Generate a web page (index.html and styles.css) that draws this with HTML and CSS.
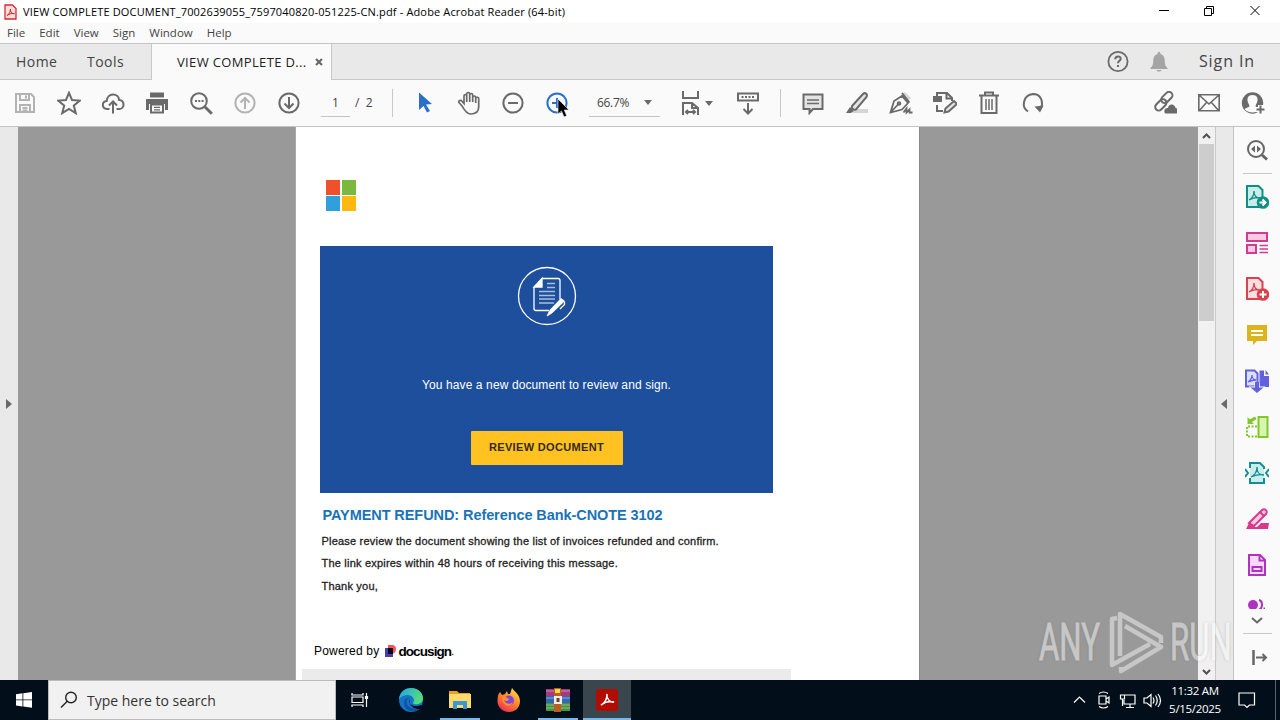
FILE: index.html
```html
<!DOCTYPE html>
<html lang="en">
<head>
  <meta charset="UTF-8">
  <title>Adobe Acrobat Reader (64-bit)</title>
  <link rel="stylesheet" href="styles.css">
</head>
<body>
  <header class="titlebar">
    <svg class="app-icon" width="13" height="16" viewBox="0 0 13 16"><path d="M1 1h7.500l3.500 3.500V15H1z" fill="#ffdcdc" stroke="#d42a2f" stroke-width="1.300"/><path d="M3.200 11.300c2-1 3.500-4 3.200-6.300c0 3 1.500 5 4 4.700c-2-.7-5 .1-7.200 1.600z" fill="none" stroke="#c9252b"/></svg>
    <span class="title">VIEW COMPLETE DOCUMENT_7002639055_7597040820-051225-CN.pdf - Adobe Acrobat Reader (64-bit)</span>
    <svg class="window-buttons" width="102" height="12" viewBox="0 0 102 12" fill="none" stroke="#000"><path d="M0 5.500h10M45.500 3.500h7v7h-7zM47.500 3.500v-2h7v7h-2M91.500 1l9 9M100.500 1l-9 9"/></svg>
  </header>

  <nav class="menu">
    <span>File</span><span>Edit</span><span>View</span><span>Sign</span><span>Window</span><span>Help</span>
  </nav>

  <div class="tabs">
    <span class="tab home">Home</span>
    <span class="tab tools">Tools</span>
    <div class="tab active"><span>VIEW COMPLETE D...</span>
      <svg width="8" height="8" viewBox="0 0 8 8" stroke="#666" stroke-width="2"><path d="M1 1l6 6M7 1L1 7"/></svg>
    </div>
    <div class="account">
      <svg width="24" height="24" viewBox="0 0 24 24" fill="none" stroke="#6a6a6a" stroke-width="1.800"><circle cx="12" cy="11.500" r="9.600"/><path stroke-width="2" d="M9.300 9.200c0-3.700 5.600-3.500 5.400-.3c-.1 2-2.700 1.900-2.700 4.300M12 15v2"/></svg>
      <svg width="24" height="24" viewBox="0 0 24 24" fill="#a5a5a5"><path d="M3.500 18c3-2.500 2.500-5 2.800-8.500c.2-3 2-5 4.200-5.500c.2-3 2.800-3 3 0c2.200.5 4 2.500 4.200 5.500c.3 3.500-.2 6 2.800 8.500v1h-17zM9.500 20h5c-.5 2-4.500 2-5 0z"/></svg>
      <span class="sign-in">Sign In</span>
    </div>
  </div>

  <div class="toolbar">
    <div class="group">
      <svg class="disabled" viewBox="0 0 24 24"><path d="M3 3h15l3 3v15H3zM7 3v6h9V3M13 4.500v3M7 21v-7h10v7M9.500 17h5M9.500 19.500h5"/></svg>
      <svg viewBox="0 0 24 24"><path d="M12 1.800l3 7.200l7.800.6l-6 5l2 7.600l-6.800-4.200l-6.800 4.200l2-7.600l-6-5l7.800-.6z"/></svg>
      <svg viewBox="0 0 24 24"><path d="M8.500 18H6c-5.500-.5-5.500-7.500-.3-8c.5-8.500 11.800-8.500 12.500-1c6 .5 5.500 9 0 9h-2.700M12 22.500V11M8 14.500l4-4l4 4"/></svg>
      <svg viewBox="0 0 24 24"><path class="solid" d="M5 1.500h14v5H5zM1 8h22v11h-3v-6H4v6H1z"/><path d="M6 13.500h12v8H6z"/><path stroke-width="1.300" d="M9 16.300h6M9 18.800h6"/></svg>
      <svg viewBox="0 0 24 24"><circle cx="10" cy="10" r="7.800"/><path stroke-width="3" d="M15.800 15.800l7 7"/><path d="M6 10h2M9.300 10h2M12.600 10h2"/></svg>
      <svg class="disabled" viewBox="0 0 24 24"><circle cx="12" cy="12" r="9.600"/><path d="M12 18V7M7.500 11.500L12 7l4.500 4.500"/></svg>
      <svg viewBox="0 0 24 24"><circle cx="12" cy="12" r="9.600"/><path d="M12 6v11M7.500 12.500L12 17l4.500-4.500"/></svg>
    </div>
    <div class="pages"><span class="page-number">1</span><span>/&nbsp; 2</span></div>
    <div class="group divided">
      <svg class="blue" viewBox="0 0 24 24"><path class="solid" d="M6 1.500l13 11.500l-6 .5l4 6.500l-3 1.500l-3.500-6.500L6 19z"/></svg>
      <svg viewBox="0 0 24 24"><path stroke-width="1.700" d="M5 15L2 11.500c-1-2 1.500-3 3-1.200l2 2.300V5c0-2 2.700-2 2.700 0v6V3c0-2 3-2 3 0v8V4c0-2 3-2 3 0v7V6.500c0-2 3-2 3 0c.6 0 3-1 3 1V16c0 4.500-3 7-8.200 7C9.500 23 7 18.500 5 15zM18.700 7v5"/></svg>
      <svg viewBox="0 0 24 24"><circle cx="12" cy="12" r="9.600"/><path d="M7 12h10"/></svg>
      <div class="hovered">
        <svg class="blue" viewBox="0 0 24 24"><circle cx="12" cy="12" r="9.600"/><path d="M7 12h10M12 7v10"/></svg>
        <svg class="cursor" width="13" height="20" viewBox="0 0 13 20"><path d="M1 1v15l3.500-3l2.500 6l2.700-1.200L7.300 12H12z" fill="#000" stroke="#fff" stroke-width=".6"/></svg>
      </div>
    </div>
    <div class="zoom"><span>66.7%</span><i class="caret"></i></div>
    <div class="fit">
      <svg viewBox="0 0 24 24"><path d="M4 0v7h15V0M4 24V12h9l6 5v7M13 12v5h5M7 21h9M9 19l-2 2l2 2M14 19l2 2l-2 2"/></svg>
      <i class="caret"></i>
    </div>
    <svg class="scroll-mode" viewBox="0 0 24 24"><path d="M2 2.500h20v7H2zM12 12v10M7.500 18l4.500 4.500l4.500-4.500"/><path stroke-dasharray="2 1.500" d="M5.500 6h13"/></svg>
    <div class="group divided comment-tools">
      <svg viewBox="0 0 24 24"><path fill="#e4e4e4" d="M2.500 3.500h19V18H12l-3.500 4v-4h-6z"/><path stroke-width="1.500" d="M6 9h12M6 12.500h12"/></svg>
      <svg viewBox="0 0 24 24"><path class="shade" d="M11 18h12v4H7z"/><path fill="#e4e4e4" d="M7 15L18 3c2-2 5 0 3.500 3L11 18.500c-2 1-5-1-4-3.500z"/><path class="solid" d="M5 16l4 4l-3 2H1z"/></svg>
      <svg viewBox="0 0 24 24"><path class="shade" d="M12 4l4-3l6 6l-4 4z"/><path stroke-width="1.800" d="M1.500 21.500L5 10l8-5l6 7l-6 6.500zM13 2l7.500 9.500M2 21l7-7.500M14.500 21.500l3-4v4l3-3v3h3"/><circle cx="10" cy="12.500" r="1.300"/></svg>
      <svg viewBox="0 0 24 24"><path class="solid" d="M0 5h9v6H0z"/><path d="M4 5V2h10l5 5v3M13.500 2v5.500H19M4 14v6h6"/><path fill="#e4e4e4" d="M11.500 21.500l1-4L21 10l3 3l-8.500 7.500z"/></svg>
      <svg viewBox="0 0 24 24"><path d="M2 4.500h20M8 4V1.500h8V4M4.500 5v17h15V5"/><path stroke-width="1.500" d="M9 8v11M12 8v11M15 8v11"/></svg>
      <svg viewBox="0 0 24 24"><path d="M7 20.500C0 16 2 4 12 3c8 0 11 8 7.500 15"/><path class="solid" d="M13.500 15.500l9-1l-3.500 7z"/></svg>
    </div>
    <div class="group share-tools">
      <svg viewBox="0 0 24 24"><g transform="rotate(-45 11 10)"><rect x="-.5" y="7" width="13" height="7" rx="3.500"/><rect x="9" y="6" width="13" height="7" rx="3.500"/></g><path class="solid" d="M12 22.500c-2-4 1-6 3-5.500c1-5 7-4 7.500 0c3 0 2.500 5 1 5.500z"/></svg>
      <svg viewBox="0 0 24 24"><path stroke-width="1.600" d="M1.800 3.800h20.400v16H1.800zM2 4l10 9L22 4M2 20l7.500-8.500M22 20l-7.500-8.500"/></svg>
      <svg viewBox="0 0 24 24"><circle class="solid" cx="11.500" cy="12" r="10.700"/><path class="paper" d="M11.500 4c4.500 0 6 3.500 4.500 7.500c-.6 1.500-1.500 2.500-1.500 4l5 2.500c-3 4.500-13 4.500-16 0l5-2.500c0-1.500-1-2.500-1.500-4C5.500 7.500 7 4 11.500 4z"/><path class="halo" d="M15 18.500h9.500M19.500 14v9"/><path d="M15.500 18.500h8M19.500 14.500v8"/></svg>
    </div>
  </div>

  <main class="viewer">
    <div class="left-pane"><i class="arrow right"></i></div>
    <div class="canvas">
      <article class="page">
        <div class="ms-logo"><i></i><i></i><i></i><i></i></div>
        <section class="banner">
          <svg width="60" height="60" viewBox="0 0 60 60" fill="none" stroke="#fff" stroke-width="1.300"><circle cx="30" cy="30" r="28.500"/><path d="M25 12.500h16q2 0 2 2v19M32 44.500H19q-2 0-2-2V21"/><path d="M17 21l8-8.500V21z" fill="#fff"/><path d="M30 17.500h8M30 21.500h8M22 25.500h16M22 29.500h16M22 33h16M22 37h15" stroke="#a9bedf"/><path d="M30 50l3-6L44 32.500l3.500 2.500L35 47z" fill="#fff" stroke-width=".8"/><path d="M43 43l4.500-4.500v-3"/></svg>
          <p>You have a new document to review and sign.</p>
          <a class="review">REVIEW DOCUMENT</a>
        </section>
        <h1>PAYMENT REFUND: Reference Bank-CNOTE 3102</h1>
        <p class="line first">Please review the document showing the list of invoices refunded and confirm.</p>
        <p class="line second">The link expires within 48 hours of receiving this message.</p>
        <p class="line third">Thank you,</p>
        <div class="powered"><span>Powered by</span>
          <svg width="11" height="12" viewBox="0 0 11 12"><path d="M3 0h4q4 0 4 4t-4 5H3z" fill="#f2545b"/><path d="M0 3h8v9H0z" fill="#4540a8"/><path d="M3 3h5v6H3z" fill="#130020"/></svg>
          <b>docusign</b><small>.</small>
        </div>
        <div class="footer-block"></div>
      </article>
    </div>
    <div class="scrollbar">
      <svg width="9" height="6" viewBox="0 0 9 6"><path d="M1 5l3.500-3.500L8 5"/></svg>
      <div class="thumb"></div>
      <svg class="down" width="9" height="6" viewBox="0 0 9 6"><path d="M1 1l3.500 3.500L8 1"/></svg>
    </div>
    <div class="right-pane"><i class="arrow left"></i></div>
    <aside class="rail">
      <svg class="gray" viewBox="0 0 24 24"><circle cx="11" cy="11" r="8"/><path stroke-width="3" d="M17 17l5 4.500"/><path class="solid" d="M10 7.500v7L6 11zM12 7.500v7l4-3.500z"/></svg>
      <hr>
      <svg class="teal" viewBox="0 0 24 24"><path d="M2 1h11.500l4 4v17H2z"/><path class="thin" d="M4 15c4-2 5-5 5-9c0 5 2 7 6 7c-4-1-7 0-11 2"/><circle class="disc" cx="18" cy="17.500" r="6.300"/><path class="white" d="M14.500 17.500h6M17.500 14.500l3 3l-3 3"/></svg>
      <svg class="pink" viewBox="0 0 24 24"><path d="M2 2h20v8H2zM2 14h9v8H2z"/><path class="thin" d="M14.500 14.500H23M14.500 18H23M14.500 21.500H23"/></svg>
      <svg class="red" viewBox="0 0 24 24"><path d="M2 1h11.500l4 4v17H2z"/><path class="thin" d="M4 15c4-2 5-5 5-9c0 5 2 7 6 7c-4-1-7 0-11 2"/><circle class="disc" cx="18" cy="17.500" r="6.300"/><path class="white" d="M14.500 17.500h7M18 14v7"/></svg>
      <svg class="yellow" viewBox="0 0 24 24"><path class="solid" d="M2 2h20v16H12l-4 4v-4H2z"/><path class="white" d="M6 8h12M6 12h12"/></svg>
      <svg class="violet" viewBox="0 0 24 24"><path d="M1 1.500h8.500l3 3v13H1z"/><path class="thin" d="M3 13c3-2 4-4 4-7c0 3 2 5 4 5c-3 0-5 1-8 2"/><path class="solid" d="M14.500 1.500h4.500v5.500h5v11h-9.500zM20.500 1l3.500 4.500h-3.500z"/><path class="halo" d="M10.500 14v4.500H6l6 5.500l6-5.500h-4.500V14"/><path class="solid" d="M10 13h4v5.500h4.500L12 24l-6.500-5.500H10z"/></svg>
      <svg class="green" viewBox="0 0 24 24"><path d="M13.500 2h9v20h-9z"/><path fill="none" stroke-dasharray="2 1.500" d="M12 11.500H2v10h11"/><path class="solid" d="M2.500 2l2.300 2.300L10 1.500l1.500 2.500L7 7l2 2H2.500z"/></svg>
      <svg class="aqua" viewBox="0 0 24 24"><path class="fill-only" d="M5 2h10l4 4v16H5z"/><path fill="none" d="M5 7V2h10l4 4v2M5 17v5h14v-5M0 8l3 4l-3 4M24 8l-3 4l3 4"/><path class="thin" d="M6 16c4-2 6-5 6-10c0 6 2 8 7 8c-5-1-8 0-13 2"/></svg>
      <svg class="rose" viewBox="0 0 24 24"><path d="M4 16L17 3c3-2 6 1 4 4L9 19z"/><path class="solid" d="M1 22l3-6l6 4h2l4-4h8l-1 6z"/><path d="M15 5l4 4"/></svg>
      <svg class="purple" viewBox="0 0 24 24"><path d="M4 2h11l5 5v15H4zM14.500 2v5.500H20"/><path d="M7.500 14h9v4h-9z"/></svg>
      <div class="clipped"><svg class="purple" viewBox="0 0 24 24"><circle class="disc" cx="8" cy="10" r="5"/><path fill="none" d="M14 5c4 1 4 8 0 10M18.500 13.500h1.500"/></svg></div>
      <svg class="gray more" width="12" height="8" viewBox="0 0 12 8"><path d="M1 1l5 4.500L11 1"/></svg>
      <hr>
      <svg class="gray" viewBox="0 0 24 24"><path stroke-width="2.500" d="M8.500 5v15"/><path d="M11 12.500h10M17.500 9l3.500 3.500l-3.500 3.500"/></svg>
    </aside>
  </main>

  <footer class="taskbar">
    <div class="start"><svg width="16" height="16" viewBox="0 0 16 16" fill="#fff"><path d="M0 2.200l6.500-.9v6.200H0zM7.300 1.200L16 0v7.500H7.300zM0 8.300h6.500v6.200L0 13.600zM7.300 8.300H16v7.500l-8.700-1.200z"/></svg></div>
    <div class="search">
      <svg width="18" height="18" viewBox="0 0 18 18" fill="none" stroke="#222" stroke-width="1.400"><circle cx="11" cy="6.500" r="5.300"/><path d="M7.300 10.300L1 16.500"/></svg>
      <span>Type here to search</span>
    </div>
    <div class="apps">
      <div class="app"><svg width="18" height="16" viewBox="0 0 18 16" fill="none" stroke="#fff" stroke-width="1.200"><path d="M1 1v2h11V1M1 15v-2h11v2M1 5h11v5.500H1zM15.500 1v14"/><path fill="#fff" d="M14.500 4.500h2v2h-2z"/></svg></div>
      <div class="app"><svg width="26" height="26" viewBox="0 0 26 26"><defs><linearGradient id="edge" x1="0" x2="1" y1="0" y2=".4"><stop offset="0" stop-color="#1fa6e8"/><stop offset="1" stop-color="#54dc7c"/></linearGradient></defs><circle cx="13" cy="13" r="12" fill="#1473c9"/><path d="M1 12C2 4 8 1 13 1c8 0 12 6 12 10c0 5-4 7-9 6c-2-1 0-2 0-4C15 7 6 6 1 12z" fill="url(#edge)"/><path d="M10 11c-4 5 0 12 12 11C16 27 6 24 6 16c0-4 3-6 6-5z" fill="#12529d"/><path d="M12 12c-3 5 4 9 11 6l2 1l-1 2c-5 3-14-1-12-9z" fill="#020f1a"/></svg></div>
      <div class="app running"><svg width="24" height="22" viewBox="0 0 24 22"><path d="M1 2h8l2 2h11v5H1z" fill="#e8a317"/><path d="M1 5h22v14H1z" fill="#ffd96a"/><path d="M5 20v-8h14v8h-4v-4H9v4z" fill="#3c97d6"/></svg></div>
      <div class="app"><svg width="24" height="24" viewBox="0 0 24 24"><defs><linearGradient id="fox" x1=".8" x2=".2" y1="0" y2="1"><stop offset="0" stop-color="#ffe14a"/><stop offset=".5" stop-color="#ff8129"/><stop offset="1" stop-color="#ee265e"/></linearGradient></defs><path d="M3 4l2 3l3-1l2-3l1 3h2l2-6c3 4 8 7 8 13c0 7-5 11-11 11S.5 19.500.5 13C.5 9 1 6 3 4z" fill="url(#fox)"/><circle cx="12" cy="12.500" r="5" fill="#8046d8"/><path d="M5 9c3-1 5 1 7 2c-1 3-4 2-5 1c1 4 6 5 9 2c-2 6-11 5-11-5z" fill="#ff922b"/></svg></div>
      <div class="app running"><svg width="26" height="24" viewBox="0 0 26 24"><path d="M1 1h24v7H1z" fill="#a43a7c"/><path d="M1 8h24v7H1z" fill="#3567b8"/><path d="M1 15h24v8H1z" fill="#46953c"/><path d="M1 3h24M1 10h24M1 17h24M1 20h24" stroke="#dacbd0" stroke-opacity=".6"/><path d="M9 0h7v24H9z" fill="#bd5d20"/><path d="M9 8h8v8H9z" fill="#eee"/><path d="M11.500 10h3v4h-3z" fill="#724027"/><path d="M10 3h5" stroke="#ffda4a" stroke-width="4"/></svg></div>
      <div class="app running current"><svg width="22" height="22" viewBox="0 0 22 22"><rect width="22" height="22" rx="3" fill="#b30b00"/><path d="M5 16c4-2 6-6 6-11c-1 4 3 9 7 8c-4-1-9 0-13 3z" fill="none" stroke="#fff" stroke-width="1.500"/></svg></div>
    </div>
    <div class="tray">
      <svg width="90" height="20" viewBox="0 0 90 20" fill="none" stroke="#fff" stroke-width="1.200"><path d="M1 12.500l5.500-5.500l5.500 5.500M26 6h7v8h-7zM33 9l3-2v6l-3-2M26 3.500q4.500-3 9 0M26 16.500q4.500 3 9 0M52 5h10v9H51v-4M57 14v3M53 17.500h8M47.500 5h4v4h-4zM49.500 9v7M71 8h3l4-3.500v12L74 13h-3zM80 7.500q2 3 0 6M82.500 5.500q3.500 5 0 10M85 4q5 6.500 0 13"/></svg>
      <div class="clock"><span>11:32 AM</span><span>5/15/2025</span></div>
      <svg width="18" height="18" viewBox="0 0 18 18" fill="none" stroke="#fff" stroke-width="1.200"><path d="M1 2h15.500v12h-5L9 16.500L6.500 14H1z"/></svg>
      <i class="show-desktop"></i>
    </div>
  </footer>

  <div class="watermark">
    <span>ANY</span>
    <svg width="58" height="66" viewBox="0 0 58 66" fill="none" stroke="#fff" stroke-width="4.500" stroke-linejoin="round"><path d="M12 47V5L53 28v6M17 17L53 38L13 62v-4M9 9l-5 1v46L42 35"/></svg>
    <span>RUN</span>
  </div>
</body>
</html>
```
FILE: styles.css
```css
* {
  box-sizing: border-box;
}
body {
  margin: 0;
  width: 1280px;
  height: 720px;
  overflow: hidden;
  position: relative;
  display: grid;
  grid-template-rows: 23px 20px 37px 46px 554px 40px;
  font-family: "Open Sans", "Noto Sans", sans-serif;
  color: #444;
  background: #fafafa;
}
svg {
  display: block;
  flex: none;
}
p, h1 {
  margin: 0;
}

/* title and menu */
.titlebar {
  display: flex;
  align-items: center;
  background: #fff;
  padding-left: 4px;
}
.title {
  margin-left: 6px;
  font-size: 11px;
  letter-spacing: 0.150px;
  color: #000;
  white-space: nowrap;
}
.window-buttons {
  margin: 0 19px 2px auto;
}
.menu {
  display: flex;
  align-items: center;
  gap: 14px;
  padding: 0 0 2px 7px;
  font-size: 11.500px;
}

/* tabs */
.tabs {
  display: flex;
  background: #e9e9e9;
  border-top: 1px solid #c4c4c4;
  border-bottom: 1px solid #c8c8c8;
}
.tab {
  display: flex;
  align-items: center;
  font-size: 14px;
  letter-spacing: 0.450px;
}
.home {
  padding-left: 16px;
  width: 87px;
}
.tools {
  width: 64px;
}
.active {
  width: 181px;
  margin-bottom: -1px;
  padding-left: 25px;
  gap: 8px;
  background: #fafafa;
  border-left: 1px solid #c8c8c8;
  border-right: 1px solid #c8c8c8;
  font-size: 13px;
  letter-spacing: 0.350px;
  color: #222;
  white-space: nowrap;
}
.account {
  display: flex;
  align-items: center;
  gap: 17px;
  margin-left: auto;
  padding-right: 25px;
}
.sign-in {
  margin: -1px 0 0 11px;
  font-size: 16px;
  letter-spacing: 0.900px;
}

/* toolbar */
.toolbar {
  display: flex;
  align-items: center;
  padding-left: 3px;
}
.toolbar svg {
  width: 24px;
  height: 24px;
  fill: none;
  stroke: #6a6a6a;
  stroke-width: 2;
}
.toolbar .solid {
  fill: #6a6a6a;
  stroke: none;
}
.toolbar .shade {
  fill: #d5d5d5;
  stroke: none;
}
.toolbar .paper {
  fill: #fafafa;
  stroke: none;
}
.toolbar .halo {
  stroke: #fafafa;
  stroke-width: 5;
}
.toolbar .disabled {
  stroke: #b3b3b3;
}
.toolbar .blue {
  stroke: #2a6fc9;
}
.toolbar .blue .solid {
  fill: #2a6fc9;
}
.group {
  display: flex;
}
.group > svg {
  margin: 0 10px;
}
.pages {
  display: flex;
  width: 81px;
  margin-left: 10px;
  font-size: 12px;
  line-height: 27px;
}
.page-number {
  width: 29px;
  margin-right: 5px;
  text-align: center;
  border-bottom: 1px solid #c4c4c4;
}
.divided {
  position: relative;
}
.divided::before {
  content: "";
  position: absolute;
  left: -11px;
  top: -2px;
  height: 28px;
  border-left: 1px solid #c8c8c8;
}
.toolbar .divided {
  margin-left: 1px;
}
.hovered {
  position: relative;
  margin: 0 10px;
}
.toolbar .cursor {
  position: absolute;
  left: 12px;
  top: 7px;
  width: 13px;
  height: 20px;
}
.zoom {
  display: flex;
  align-items: center;
  width: 71px;
  height: 28px;
  margin-left: 10px;
  padding-left: 8px;
  gap: 15px;
  border-bottom: 1px solid #c4c4c4;
  font-size: 12px;
  letter-spacing: -0.300px;
}
.caret {
  border: 4px solid transparent;
  border-top: 5px solid #6a6a6a;
  border-bottom: 0;
}
.fit {
  display: flex;
  align-items: center;
  gap: 2px;
  margin-left: 19px;
}
.scroll-mode {
  margin-left: 23px;
}
.toolbar .comment-tools {
  margin-left: 31px;
}
.share-tools {
  margin-left: auto;
  padding-right: 5px;
}

/* document viewer */
.viewer {
  display: grid;
  grid-template-columns: 18px 1180px 17px 18px 47px;
  border-top: 1px solid #c4c4c4;
  min-height: 0;
}
.left-pane, .right-pane {
  display: flex;
  align-items: center;
  justify-content: center;
  background: #e9e9e9;
}
.right-pane {
  border-left: 1px solid #c8c8c8;
  padding-right: 2px;
}
.arrow {
  border: 5px solid transparent;
}
.arrow.right {
  border-left: 6px solid #6a6a6a;
  border-right: 0;
}
.arrow.left {
  border-right: 6px solid #6a6a6a;
  border-left: 0;
}
.canvas {
  background: #999;
  padding-left: 277px;
}
.page {
  display: flex;
  flex-direction: column;
  width: 625px;
  height: 553px;
  padding: 53px 0 0 25px;
  background: #fff;
  border-left: 1px solid #aaa;
  border-right: 1px solid #888;
  font-family: "Liberation Sans", Arial, sans-serif;
}
.ms-logo {
  display: grid;
  grid-template-columns: 14.500px 14.500px;
  grid-auto-rows: 14.500px;
  gap: 1.500px;
  margin-left: 4.500px;
}
.ms-logo i {
  background: #f1512a;
}
.ms-logo i:nth-child(2) {
  background: #7bb83e;
}
.ms-logo i:nth-child(3) {
  background: #30a0dc;
}
.ms-logo i:nth-child(4) {
  background: #fdb90f;
}
.banner {
  display: flex;
  flex-direction: column;
  align-items: center;
  width: 453px;
  height: 247px;
  margin: 35.500px 0 0 -1px;
  padding-top: 20px;
  background: #1d4f9c;
}
.banner p {
  margin-top: 51px;
  font-size: 12px;
  line-height: 16px;
  letter-spacing: 0.110px;
  color: #fff;
}
.review {
  width: 152px;
  margin-top: 38px;
  padding-bottom: 1px;
  background: #ffc220;
  border-radius: 1px;
  color: #33291c;
  font-size: 11px;
  font-weight: bold;
  line-height: 33px;
  letter-spacing: 0.330px;
  text-align: center;
}
.page h1 {
  margin: 14px 0 0 1.500px;
  font-size: 14.500px;
  line-height: 17px;
  letter-spacing: -0.080px;
  color: #1a73b7;
}
.line {
  margin-left: 0.500px;
  font-size: 11px;
  line-height: 14px;
  letter-spacing: 0.205px;
  -webkit-text-stroke: 0.300px #222;
  color: #222;
}
.first {
  margin-top: 10px;
}
.second {
  margin-top: 8px;
}
.third {
  margin-top: 9px;
}
.powered {
  display: flex;
  align-items: center;
  margin: 50px 0 0 -7px;
  height: 16px;
  font-size: 12px;
  letter-spacing: 0.200px;
  color: #000;
}
.powered svg {
  margin: 0 2px 0 6px;
}
.powered b {
  font-size: 13.500px;
  letter-spacing: -0.900px;
}
.footer-block {
  flex: 1;
  width: 489px;
  margin: 10px 0 0 -19px;
  background: #ebebeb;
}
.scrollbar {
  display: flex;
  flex-direction: column;
  align-items: center;
  padding: 6px 0 5px;
  background: #f1f1f1;
}
.scrollbar svg {
  fill: none;
  stroke: #505050;
  stroke-width: 2;
}
.thumb {
  width: 15px;
  height: 177px;
  margin-top: 5px;
  background: #cdcdcd;
}
.down {
  margin-top: auto;
}

/* tool rail */
.rail {
  display: flex;
  flex-direction: column;
  align-items: center;
  border-left: 1px solid #c4c4c4;
}
.rail > svg {
  width: 24px;
  height: 24px;
  margin: 11px 0;
}
.rail svg {
  stroke: currentColor;
  stroke-width: 2;
}
.rail hr {
  flex: none;
  width: 29px;
  height: 1px;
  margin: 0;
  border: 0;
  background: #c8c8c8;
}
.rail .solid, .rail .disc {
  fill: currentColor;
  stroke: none;
}
.rail .thin {
  fill: none;
  stroke-width: 1.300;
}
.rail .white {
  fill: none;
  stroke: #fff;
}
.rail .halo {
  fill: none;
  stroke: #fafafa;
}
.fill-only {
  stroke: none;
}
.gray {
  color: #666;
  fill: none;
}
.teal {
  color: #128f85;
  fill: #c9ecec;
}
.pink {
  color: #d23b91;
  fill: #fbc9e3;
}
.red {
  color: #d9414f;
  fill: #ffdede;
}
.yellow {
  color: #dcb51c;
}
.violet {
  color: #6262df;
  fill: #dedeff;
}
.green {
  color: #82c72b;
  fill: #d5f5b0;
}
.aqua {
  color: #158d91;
  fill: #c9ecec;
}
.rose {
  color: #d8398c;
  fill: #fbc9e3;
}
.purple {
  color: #b033c0;
  fill: #fbd9ff;
}
.clipped {
  flex: none;
  height: 21px;
  padding-top: 7px;
  overflow: hidden;
}
.clipped svg {
  width: 24px;
  height: 24px;
}
.rail .more {
  width: 12px;
  height: 8px;
  margin: 8px 0;
}

/* taskbar */
.taskbar {
  display: flex;
  background: #020f1a;
  color: #fff;
}
.start {
  display: flex;
  align-items: center;
  justify-content: center;
  width: 48px;
}
.search {
  display: flex;
  align-items: center;
  width: 288px;
  padding-left: 11px;
  gap: 9px;
  background: #f1f1f1;
  border: 1px solid #bbb;
  color: #333;
  font-size: 14px;
}
.apps {
  display: flex;
  gap: 1px;
}
.app {
  position: relative;
  display: flex;
  align-items: center;
  justify-content: center;
  width: 48px;
}
.app:first-child {
  margin-right: 2px;
}
.running::after {
  content: "";
  position: absolute;
  left: 4px;
  right: 4px;
  bottom: 0;
  height: 2px;
  background: #76b9ed;
}
.current {
  background: #3a464e;
}
.current::after {
  left: 0;
  right: 0;
}
.tray {
  display: flex;
  align-items: center;
  margin-left: auto;
}
.clock {
  display: flex;
  flex-direction: column;
  align-items: center;
  width: 56px;
  margin: 0 15px 0 4px;
  font-size: 11.500px;
  line-height: 18px;
  letter-spacing: -0.300px;
  white-space: nowrap;
}
.show-desktop {
  height: 40px;
  margin-left: 19px;
  border-left: 1px solid #59636b;
  width: 5px;
}

/* recording watermark */
.watermark {
  position: absolute;
  left: 1039px;
  top: 608px;
  display: flex;
  align-items: center;
  opacity: 0.45;
  color: #fff;
}
.watermark span {
  width: 63px;
  padding-top: 2px;
  font: 400 52px/66px Roboto, sans-serif;
  transform: scaleX(0.600);
  transform-origin: left;
  text-shadow: 0 0 3px #555;
  -webkit-text-stroke: 1px #fff;
}
.watermark svg {
  margin: 0 4px 0 6px;
}
```
